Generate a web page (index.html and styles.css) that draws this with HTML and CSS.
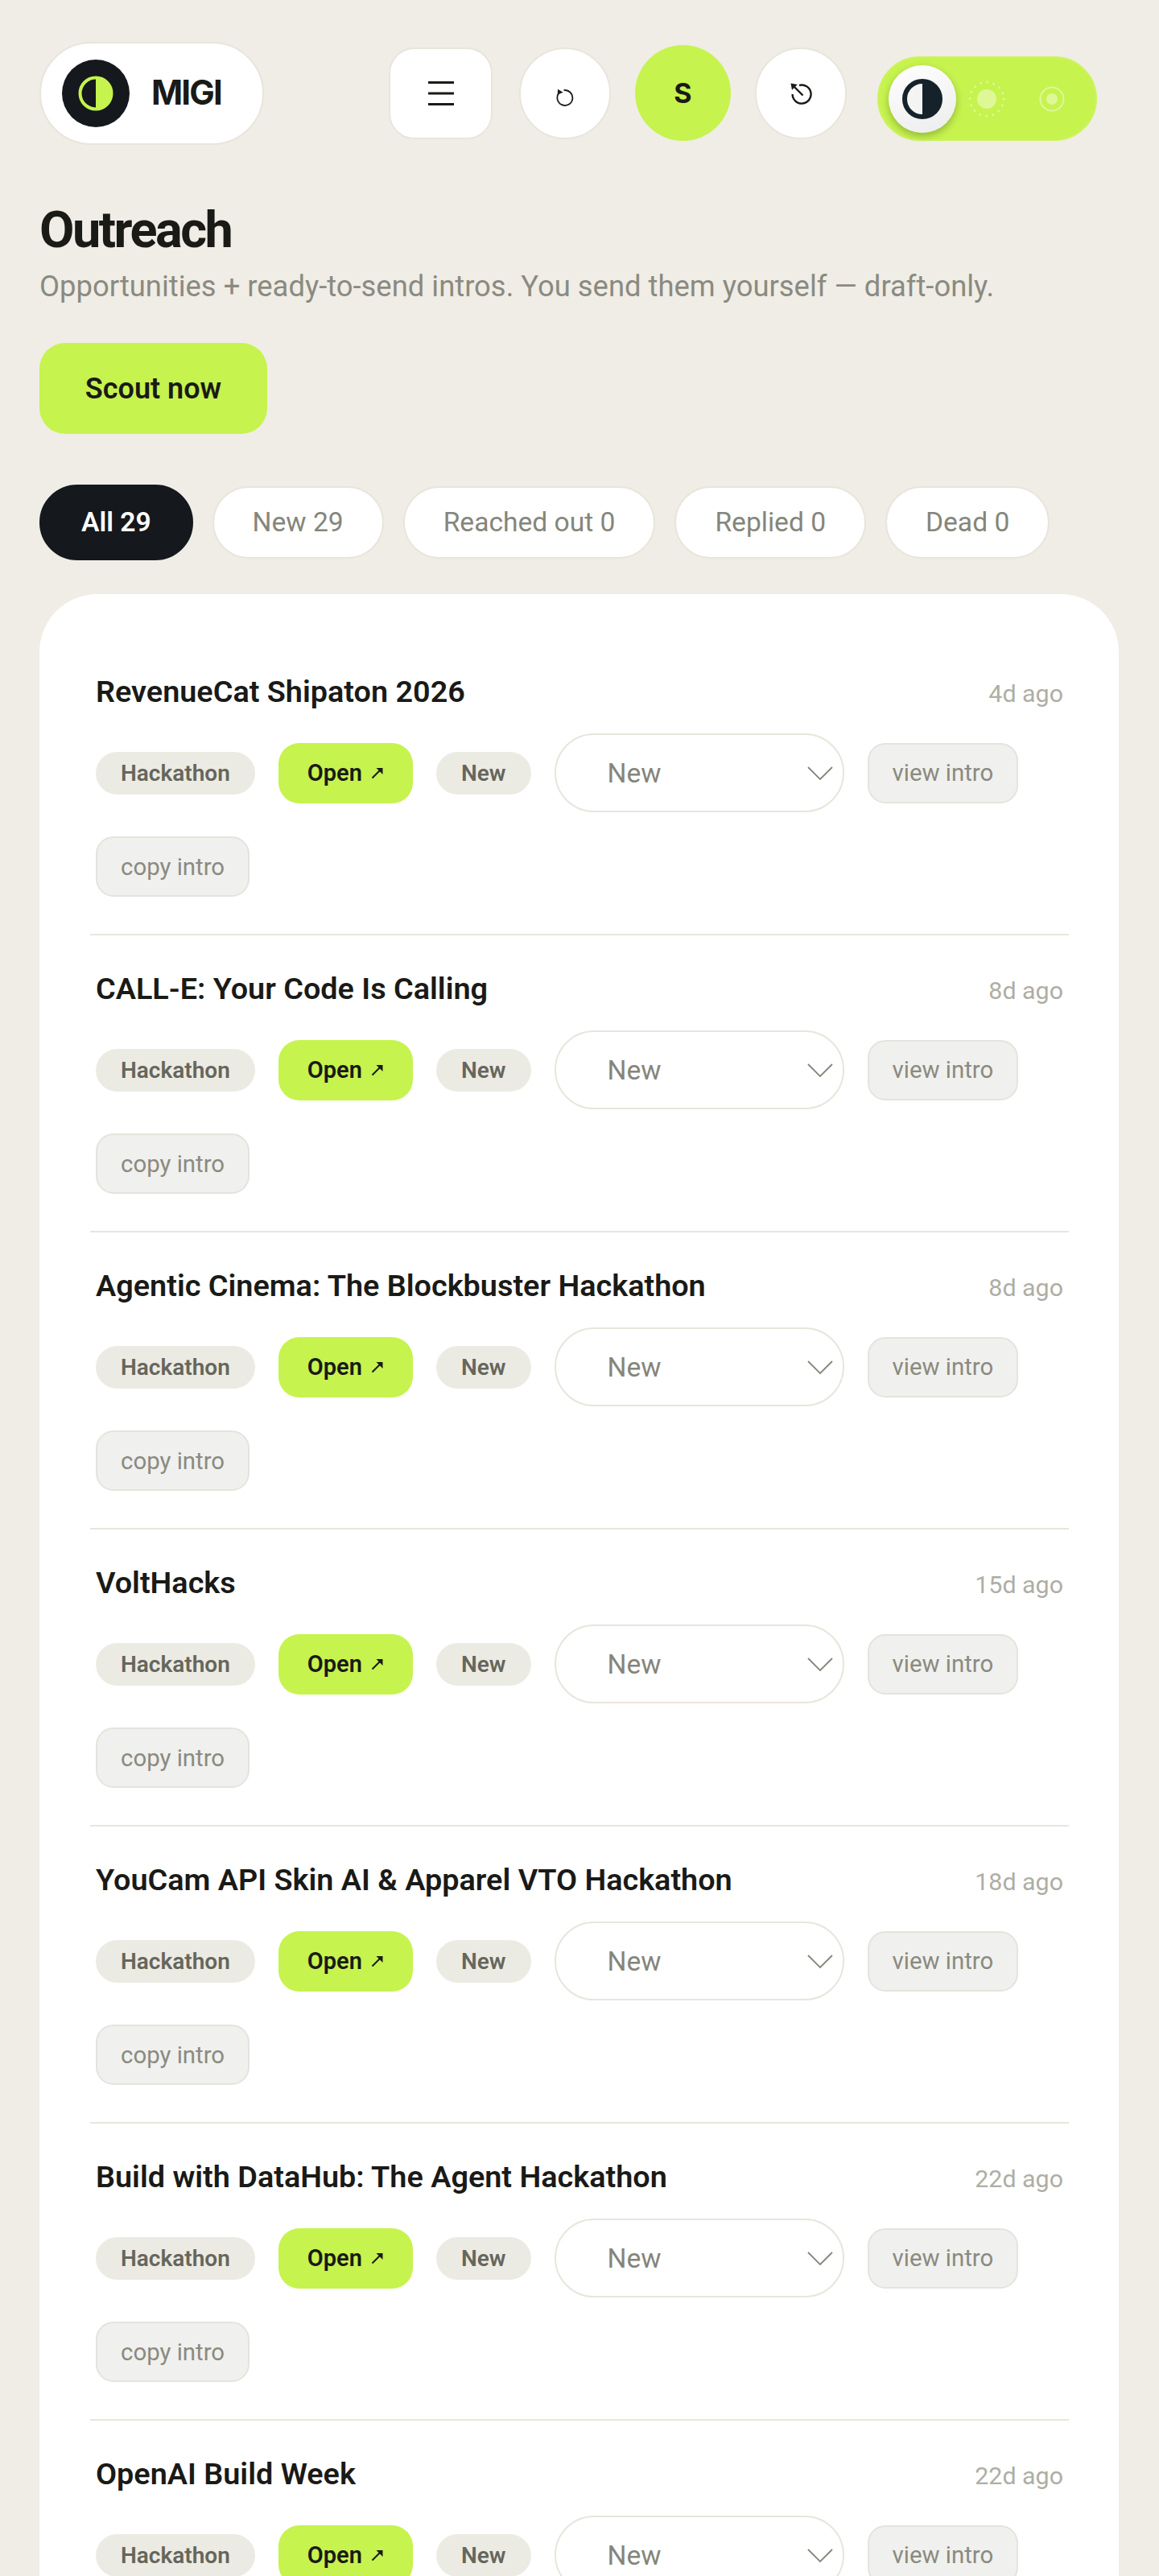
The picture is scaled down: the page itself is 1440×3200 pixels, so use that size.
FILE: index.html
```html
<!DOCTYPE html>
<html lang="en">
  <head>
    <meta charset="UTF-8" />
    <title>Outreach</title>
    <link rel="stylesheet" href="styles.css">
  </head>
  <body>
    <header class="topbar">
      <div class="brand">
        <svg class="brand-mark" viewBox="0 0 84 84">
          <circle cx="42" cy="42" r="42" fill="#15181c" />
          <circle cx="42" cy="42" r="19.5" fill="#15181c" stroke="#c6f34e" stroke-width="4" />
          <path d="M42 22.5a19.5 19.5 0 0 1 0 39z" fill="#c6f34e" />
        </svg>
        <span class="brand-name">MIGI</span>
      </div>
      <div class="tools">
        <button class="tool tool-square">
          <svg width="32" height="30" viewBox="0 0 32 30"><path d="M0 1.5h32M0 15h32M0 28.5h32" stroke="#1a1a17" stroke-width="3" fill="none" /></svg>
        </button>
        <button class="tool">
          <svg class="icon-refresh" width="22" height="22" viewBox="0 0 22 22"><path d="M9.5 2.1A9.5 9.5 0 1 1 3.6 5.4" stroke="#1a1a17" stroke-width="1.8" fill="none" /><path d="M2 .8l6.6 4-6.8 2.6z" fill="#1a1a17" /></svg>
        </button>
        <button class="tool tool-user">S</button>
        <button class="tool">
          <svg class="icon-history" width="27" height="27" viewBox="0 0 27 27"><path d="M11 3A11.5 11.5 0 1 1 2.6 14" stroke="#1a1a17" stroke-width="2.4" fill="none" /><path d="M15.5 15.5L4 4" stroke="#1a1a17" stroke-width="2.4" fill="none" /><path d="M.5.5L8.8 2 2 8.8z" fill="#1a1a17" /></svg>
        </button>
        <div class="theme-toggle">
          <span class="knob">
            <svg width="50" height="50" viewBox="0 0 50 50"><circle cx="25" cy="25" r="22" fill="#f4f4f4" stroke="#15222a" stroke-width="6" /><path d="M25 3a22 22 0 0 1 0 44z" fill="#15222a" /></svg>
          </span>
          <svg class="theme-opt" width="46" height="46" viewBox="0 0 46 46">
            <circle cx="23" cy="23" r="12" fill="#fff" />
            <circle cx="23" cy="23" r="21" fill="none" stroke="#fff" stroke-width="3" stroke-linecap="round" stroke-dasharray="0 8.25" />
          </svg>
          <svg class="theme-opt" width="46" height="46" viewBox="0 0 46 46">
            <circle cx="23" cy="23" r="7" fill="#fff" />
            <circle cx="23" cy="23" r="14.5" fill="none" stroke="#fff" stroke-width="2" />
          </svg>
        </div>
      </div>
    </header>

    <main>
      <h1>Outreach</h1>
      <p class="subtitle">Opportunities + ready-to-send intros. You send them yourself — draft-only.</p>
      <button class="scout-btn">Scout now</button>

      <nav class="tabs">
        <a class="tab active">All 29</a>
        <a class="tab">New 29</a>
        <a class="tab">Reached out 0</a>
        <a class="tab">Replied 0</a>
        <a class="tab">Dead 0</a>
      </nav>

      <section class="list">
        <article class="item">
          <div class="item-head">
            <h3 class="item-title">RevenueCat Shipaton 2026</h3>
            <span class="item-age">4d ago</span>
          </div>
          <div class="item-row">
            <span class="pill">Hackathon</span>
            <a class="pill pill-open">Open<svg width="16" height="16" viewBox="0 0 16 16"><path d="M1.5 14.5L12 4" stroke="#1a1a17" stroke-width="2" fill="none" /><path d="M6.5 2H14.5V10z" fill="#1a1a17" /></svg></a>
            <span class="pill">New</span>
            <div class="status-select">New<svg width="32" height="18" viewBox="0 0 32 18"><path d="M1 1l15 15L31 1" stroke="#85857b" stroke-width="1.8" fill="none" /></svg></div>
            <button class="ghost-btn">view intro</button>
            <button class="ghost-btn">copy intro</button>
          </div>
        </article>
        <article class="item">
          <div class="item-head">
            <h3 class="item-title">CALL-E: Your Code Is Calling</h3>
            <span class="item-age">8d ago</span>
          </div>
          <div class="item-row">
            <span class="pill">Hackathon</span>
            <a class="pill pill-open">Open<svg width="16" height="16" viewBox="0 0 16 16"><path d="M1.5 14.5L12 4" stroke="#1a1a17" stroke-width="2" fill="none" /><path d="M6.5 2H14.5V10z" fill="#1a1a17" /></svg></a>
            <span class="pill">New</span>
            <div class="status-select">New<svg width="32" height="18" viewBox="0 0 32 18"><path d="M1 1l15 15L31 1" stroke="#85857b" stroke-width="1.8" fill="none" /></svg></div>
            <button class="ghost-btn">view intro</button>
            <button class="ghost-btn">copy intro</button>
          </div>
        </article>
        <article class="item">
          <div class="item-head">
            <h3 class="item-title">Agentic Cinema: The Blockbuster Hackathon</h3>
            <span class="item-age">8d ago</span>
          </div>
          <div class="item-row">
            <span class="pill">Hackathon</span>
            <a class="pill pill-open">Open<svg width="16" height="16" viewBox="0 0 16 16"><path d="M1.5 14.5L12 4" stroke="#1a1a17" stroke-width="2" fill="none" /><path d="M6.5 2H14.5V10z" fill="#1a1a17" /></svg></a>
            <span class="pill">New</span>
            <div class="status-select">New<svg width="32" height="18" viewBox="0 0 32 18"><path d="M1 1l15 15L31 1" stroke="#85857b" stroke-width="1.8" fill="none" /></svg></div>
            <button class="ghost-btn">view intro</button>
            <button class="ghost-btn">copy intro</button>
          </div>
        </article>
        <article class="item">
          <div class="item-head">
            <h3 class="item-title">VoltHacks</h3>
            <span class="item-age">15d ago</span>
          </div>
          <div class="item-row">
            <span class="pill">Hackathon</span>
            <a class="pill pill-open">Open<svg width="16" height="16" viewBox="0 0 16 16"><path d="M1.5 14.5L12 4" stroke="#1a1a17" stroke-width="2" fill="none" /><path d="M6.5 2H14.5V10z" fill="#1a1a17" /></svg></a>
            <span class="pill">New</span>
            <div class="status-select">New<svg width="32" height="18" viewBox="0 0 32 18"><path d="M1 1l15 15L31 1" stroke="#85857b" stroke-width="1.8" fill="none" /></svg></div>
            <button class="ghost-btn">view intro</button>
            <button class="ghost-btn">copy intro</button>
          </div>
        </article>
        <article class="item">
          <div class="item-head">
            <h3 class="item-title">YouCam API Skin AI &amp; Apparel VTO Hackathon</h3>
            <span class="item-age">18d ago</span>
          </div>
          <div class="item-row">
            <span class="pill">Hackathon</span>
            <a class="pill pill-open">Open<svg width="16" height="16" viewBox="0 0 16 16"><path d="M1.5 14.5L12 4" stroke="#1a1a17" stroke-width="2" fill="none" /><path d="M6.5 2H14.5V10z" fill="#1a1a17" /></svg></a>
            <span class="pill">New</span>
            <div class="status-select">New<svg width="32" height="18" viewBox="0 0 32 18"><path d="M1 1l15 15L31 1" stroke="#85857b" stroke-width="1.8" fill="none" /></svg></div>
            <button class="ghost-btn">view intro</button>
            <button class="ghost-btn">copy intro</button>
          </div>
        </article>
        <article class="item">
          <div class="item-head">
            <h3 class="item-title">Build with DataHub: The Agent Hackathon</h3>
            <span class="item-age">22d ago</span>
          </div>
          <div class="item-row">
            <span class="pill">Hackathon</span>
            <a class="pill pill-open">Open<svg width="16" height="16" viewBox="0 0 16 16"><path d="M1.5 14.5L12 4" stroke="#1a1a17" stroke-width="2" fill="none" /><path d="M6.5 2H14.5V10z" fill="#1a1a17" /></svg></a>
            <span class="pill">New</span>
            <div class="status-select">New<svg width="32" height="18" viewBox="0 0 32 18"><path d="M1 1l15 15L31 1" stroke="#85857b" stroke-width="1.8" fill="none" /></svg></div>
            <button class="ghost-btn">view intro</button>
            <button class="ghost-btn">copy intro</button>
          </div>
        </article>
        <article class="item">
          <div class="item-head">
            <h3 class="item-title">OpenAI Build Week</h3>
            <span class="item-age">22d ago</span>
          </div>
          <div class="item-row">
            <span class="pill">Hackathon</span>
            <a class="pill pill-open">Open<svg width="16" height="16" viewBox="0 0 16 16"><path d="M1.5 14.5L12 4" stroke="#1a1a17" stroke-width="2" fill="none" /><path d="M6.5 2H14.5V10z" fill="#1a1a17" /></svg></a>
            <span class="pill">New</span>
            <div class="status-select">New<svg width="32" height="18" viewBox="0 0 32 18"><path d="M1 1l15 15L31 1" stroke="#85857b" stroke-width="1.8" fill="none" /></svg></div>
            <button class="ghost-btn">view intro</button>
          </div>
        </article>
      </section>
    </main>
  </body>
</html>
```

FILE: styles.css
```css
/* General Styling */
* {
  box-sizing: border-box;
}

html,
body {
  height: 3200px;
  overflow: hidden;
}

body {
  margin: 0;
  background-color: #f0ede6;
  color: #1a1a17;
  font-family: Roboto, "Noto Sans", sans-serif;
}

button {
  font-family: inherit;
  cursor: pointer;
}

/* Top bar */
.topbar {
  display: flex;
  align-items: center;
  height: 180px;
  padding: 51px 0 0 49px;
}

.brand {
  display: flex;
  align-items: center;
  gap: 27px;
  width: 279px;
  height: 128px;
  padding-left: 26px;
  background-color: white;
  border: 2px solid #e8e5dc;
  border-radius: 64px;
}

.brand-mark {
  width: 84px;
  height: 84px;
}

.brand-name {
  margin-top: -2px;
  font-family: Inter, sans-serif;
  font-size: 42px;
  font-weight: 700;
  letter-spacing: -1.8px;
}

.tools {
  display: flex;
  align-items: center;
  gap: 30px;
  margin-left: 155px;
}

.tool {
  display: flex;
  align-items: center;
  justify-content: center;
  width: 114px;
  height: 114px;
  padding: 0;
  background-color: white;
  border: 2px solid #e8e5dc;
  border-radius: 50%;
}

.tool-square {
  width: 129px;
  margin-right: 3px;
  border-radius: 32px;
}

.tool-user {
  width: 119px;
  height: 119px;
  background-color: #c6f34e;
  border: none;
  font-family: Inter, sans-serif;
  font-size: 34px;
  font-weight: 700;
  color: #1a1a17;
}

.icon-refresh {
  margin-top: 11px;
}

.icon-history {
  margin-top: 2px;
}

.theme-toggle {
  display: flex;
  align-items: center;
  width: 273px;
  height: 105px;
  margin: 14px 0 0 8px;
  padding-left: 12px;
  background-color: #c6f34e;
  border: 2px solid #cdf35f;
  border-radius: 53px;
}

.knob {
  display: flex;
  align-items: center;
  justify-content: center;
  width: 84px;
  height: 84px;
  background: linear-gradient(160deg, #ffffff, #ececec);
  border-radius: 50%;
  box-shadow: 0 4px 10px rgba(0, 0, 0, 0.25);
}

.theme-opt {
  opacity: 0.42;
  margin-left: 15px;
}

.theme-opt + .theme-opt {
  margin-left: 35px;
}

/* Page heading */
main {
  padding: 0 50px 0 49px;
}

h1 {
  margin: 70px 0 0;
  font-size: 63px;
  line-height: 72px;
  font-weight: 700;
  letter-spacing: -2.5px;
}

.subtitle {
  margin: 8px 0 0;
  font-size: 36.4px;
  line-height: 52px;
  color: #8a8a80;
}

.scout-btn {
  display: block;
  width: 283px;
  height: 113px;
  margin-top: 44px;
  background-color: #c6f34e;
  border: none;
  border-radius: 32px;
  font-size: 36px;
  font-weight: 600;
  color: #1a1a17;
}

/* Filter tabs */
.tabs {
  display: flex;
  align-items: center;
  gap: 24px;
  height: 94px;
  margin-top: 63px;
}

.tab {
  display: flex;
  align-items: center;
  height: 90px;
  padding: 0 48px 2px;
  background-color: white;
  border: 2px solid #e8e5dc;
  border-radius: 45px;
  font-size: 33.6px;
  color: #85857b;
}

.tab.active {
  height: 94px;
  padding: 0 50px 2px;
  background-color: #15181c;
  border-color: #15181c;
  border-radius: 47px;
  font-weight: 600;
  color: white;
}

/* Opportunity list */
.list {
  height: 2600px;
  margin-top: 42px;
  padding: 55px 62px 0 63px;
  background-color: white;
  border-radius: 72px 72px 0 0;
}

.item {
  height: 369px;
  padding: 36px 7px 0;
  border-bottom: 2px solid #e8e5dc;
}

.item-head {
  display: flex;
  justify-content: space-between;
  align-items: baseline;
}

.item-title {
  margin: 0;
  font-size: 37.8px;
  line-height: 60px;
  font-weight: 600;
}

.item-age {
  font-size: 30.4px;
  color: #aeaea4;
}

.item-row {
  display: flex;
  flex-wrap: wrap;
  align-items: center;
  column-gap: 29px;
  row-gap: 30px;
  margin-top: 22px;
}

.pill {
  display: flex;
  align-items: center;
  height: 53px;
  padding: 0 31px;
  background-color: #ecebe3;
  border-radius: 27px;
  font-size: 28px;
  font-weight: 600;
  color: #66665c;
}

.pill-open {
  height: 75px;
  padding: 0 36px;
  background-color: #c6f34e;
  border-radius: 26px;
  font-size: 29px;
  color: #1a1a17;
}

.pill-open svg {
  margin-left: 11px;
}

.status-select {
  position: relative;
  display: flex;
  align-items: center;
  width: 360px;
  height: 98px;
  padding-left: 64px;
  background-color: white;
  border: 2px solid #e8e5dc;
  border-radius: 49px;
  font-size: 33.6px;
  color: #85857b;
}

.status-select svg {
  position: absolute;
  right: 12px;
  top: 39px;
}

.ghost-btn {
  height: 75px;
  padding: 0 29px;
  background-color: #f0f0ee;
  border: 2px solid #e4e4de;
  border-radius: 22px;
  font-size: 29.4px;
  color: #8a8a80;
}
```
